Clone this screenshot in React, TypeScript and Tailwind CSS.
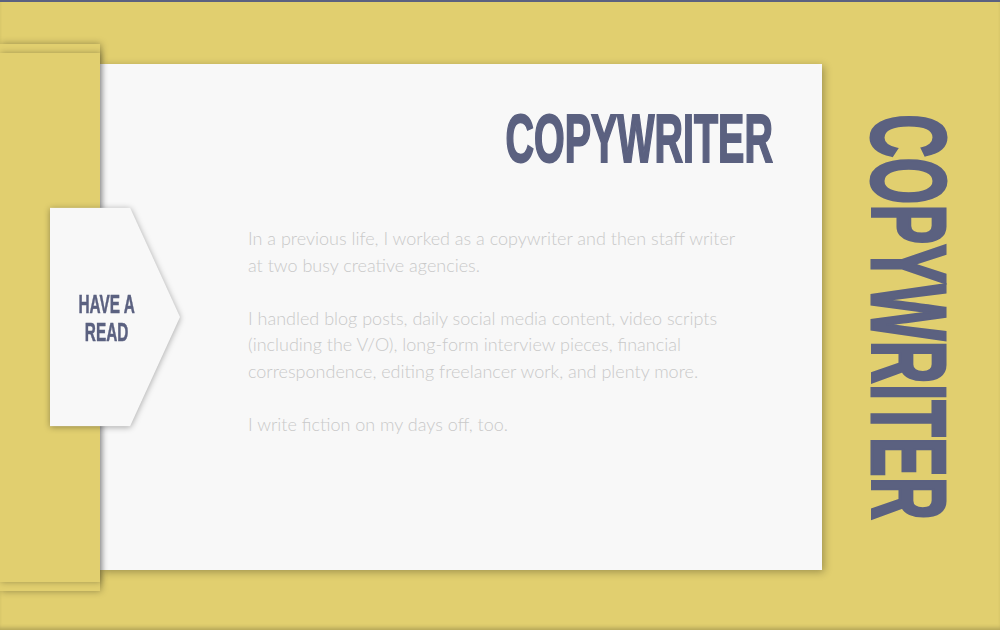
import React from "react";

const condensed = "font-['Liberation_Sans',Arial,sans-serif] font-bold uppercase text-[#5b6180]";

export default function App() {
  return (
    <div className="relative flex h-[630px] w-full items-center overflow-hidden border-t-2 border-[#5b6180] bg-[#e1cf6f] pt-[2px] shadow-[inset_0_-4px_4px_-2px_rgba(0,0,0,0.22)]">
      {/* left folded sheets */}
      <div className="relative z-10 flex h-[547px] w-[100px] shrink-0 items-center bg-[#e1cf6f] shadow-[1px_0_7px_rgba(0,0,0,0.35)]">
        <div className="h-[529px] w-full bg-[#e1cf6f] shadow-[1px_0_6px_rgba(0,0,0,0.3)]" />

        {/* have a read tab */}
        <div className="absolute left-[50px] top-1/2 -translate-y-1/2 drop-shadow-[0_1px_3px_rgba(0,0,0,0.35)]">
          <div className="flex h-[219px] w-[130px] items-center justify-center bg-[#f8f8f8] pr-[16px] [clip-path:polygon(0_0,61.5%_0,100%_50%,61.5%_100%,0_100%)]">
            <div className={`${condensed} scale-x-[0.58] text-center text-[26.5px] leading-[28px] [-webkit-text-stroke:0.5px_#5b6180] whitespace-nowrap`}>
              Have a<br />Read
            </div>
          </div>
        </div>
      </div>

      {/* card */}
      <div className="flex h-[506px] w-[722px] shrink-0 flex-col bg-[#f8f8f8] shadow-[2px_2px_8px_rgba(0,0,0,0.3)]">
        <div className="flex justify-end pr-[49px] pt-[40px]">
          <h1 className={`${condensed} origin-right scale-x-[0.58] text-[68px] leading-none [-webkit-text-stroke:2px_#5b6180] whitespace-nowrap`}>
            Copywriter
          </h1>
        </div>
        <div className="mt-[53px] w-[500px] pl-[148px] box-content font-['Lato',sans-serif] text-[18px] font-light leading-[26.5px] text-[#c9c9c9]">
          <p>In a previous life, I worked as a copywriter and then staff writer at two busy creative agencies.</p>
          <p className="mt-[26.5px]">
            I handled blog posts, daily social media content, video scripts (including the V/O), long-form interview
            pieces, financial correspondence, editing freelancer work, and plenty more.
          </p>
          <p className="mt-[26.5px]">I write fiction on my days off, too.</p>
        </div>
      </div>

      {/* vertical title */}
      <div className="flex flex-1 items-center justify-center pr-[4px]">
        <div
          className={`${condensed} scale-y-[0.564] text-[106px] leading-none [-webkit-text-stroke:3px_#5b6180] [writing-mode:vertical-rl] whitespace-nowrap`}
        >
          Copywriter
        </div>
      </div>
    </div>
  );
}
